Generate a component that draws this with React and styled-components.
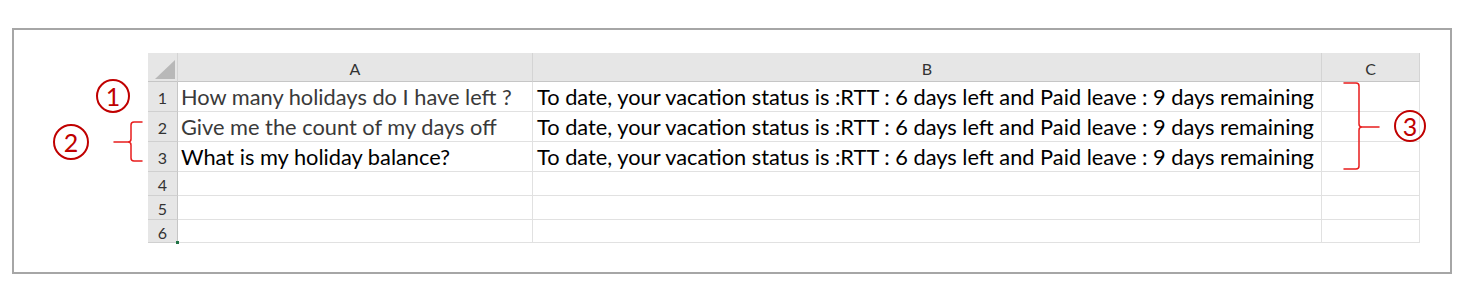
import React from "react";
import styled, { createGlobalStyle } from "styled-components";

const GlobalStyle = createGlobalStyle`
  html, body {
    margin: 0;
    padding: 0;
    background: #ffffff;
  }
  body {
    font-family: "Lato", "Open Sans", sans-serif;
  }
`;

const Page = styled.div`
  position: relative;
  width: 1469px;
  height: 292px;
  padding: 28px 0 0 12px;
  box-sizing: border-box;
`;

const Frame = styled.div`
  width: 1440px;
  height: 246px;
  box-sizing: border-box;
  border: 2px solid #a6a6a6;
  padding: 23px 0 0 134px;
`;

const Sheet = styled.div`
  display: grid;
  grid-template-columns: 30px 355px 789px 98px;
  grid-template-rows: 29px 30px 30px 30px 24px 24px 23px;
`;

const Corner = styled.div`
  position: relative;
  background: #e6e6e6;
  border-bottom: 1px solid #c6c6c6;
  border-right: 1px solid #d4d4d4;
  box-sizing: border-box;

  &::after {
    content: "";
    position: absolute;
    right: 2px;
    bottom: 2px;
    width: 0;
    height: 0;
    border-style: solid;
    border-width: 0 0 19px 20px;
    border-color: transparent transparent #b8b8b8 transparent;
  }
`;

const ColHead = styled.div`
  background: #e6e6e6;
  border-bottom: 1px solid #c6c6c6;
  border-right: 1px solid #d4d4d4;
  box-sizing: border-box;
  display: flex;
  align-items: center;
  justify-content: center;
  padding-top: 2px;
  font-family: "Lato", "Open Sans", sans-serif;
  font-size: 16px;
  color: #333333;
`;

const RowHead = styled.div`
  position: relative;
  background: #e6e6e6;
  border-bottom: 1px solid #d0d0d0;
  border-right: 1px solid #c6c6c6;
  box-sizing: border-box;
  display: flex;
  align-items: center;
  justify-content: center;
  padding-top: 2px;
  font-family: "Lato", "Open Sans", sans-serif;
  font-size: 16px;
  color: #333333;

  ${(p) =>
    p.$last &&
    `&::after {
      content: "";
      position: absolute;
      right: -2px;
      bottom: -2px;
      width: 3px;
      height: 3px;
      background: #217346;
    }`}
`;

const Cell = styled.div`
  border-bottom: 1px solid #e1e1e1;
  border-right: 1px solid #e1e1e1;
  box-sizing: border-box;
  display: flex;
  align-items: center;
  padding-left: ${(p) => (p.$wide ? "4px" : "3px")};
  font-family: "Lato", "Open Sans", sans-serif;
  font-size: 21.8px;
  color: ${(p) => p.$color || "#000000"};
  white-space: nowrap;
  overflow: hidden;
`;

const Badge = styled.div`
  position: absolute;
  left: ${(p) => p.$x - p.$d / 2}px;
  top: ${(p) => p.$y - p.$d / 2}px;
  width: ${(p) => p.$d}px;
  height: ${(p) => p.$d}px;
  box-sizing: border-box;
  border: 2px solid #c00000;
  border-radius: 50%;
  display: flex;
  align-items: center;
  justify-content: center;
  font-family: "Lato", "Open Sans", sans-serif;
  font-size: 25px;
  color: #c00000;
`;

const Braces = styled.svg`
  position: absolute;
  left: 0;
  top: 0;
  pointer-events: none;
`;

const answer =
  "To date, your vacation status is :RTT : 6 days left and Paid leave : 9 days remaining";

const rows = [
  { n: 1, a: "How many holidays do I have left ?", color: "#3a3a3a", b: answer },
  { n: 2, a: "Give me the count of my days off", color: "#3a3a3a", b: answer },
  { n: 3, a: "What is my holiday balance?", color: "#000000", b: answer },
  { n: 4, a: "", b: "" },
  { n: 5, a: "", b: "" },
  { n: 6, a: "", b: "" },
];

export default function App() {
  return (
    <>
      <GlobalStyle />
      <Page>
        <Frame>
          <Sheet>
            <Corner />
            <ColHead>A</ColHead>
            <ColHead>B</ColHead>
            <ColHead>C</ColHead>
            {rows.map((r) => (
              <React.Fragment key={r.n}>
                <RowHead $last={r.n === 6}>{r.n}</RowHead>
                <Cell $color={r.color}>{r.a}</Cell>
                <Cell $wide>{r.b}</Cell>
                <Cell />
              </React.Fragment>
            ))}
          </Sheet>
        </Frame>

        <Badge $x={113} $y={96} $d={34}>1</Badge>
        <Badge $x={71} $y={142} $d={36}>2</Badge>
        <Badge $x={1410} $y={126} $d={32}>3</Badge>

        <Braces width="1469" height="292" viewBox="0 0 1469 292">
          <g fill="none" stroke="#e81c1c" strokeWidth="1.5" strokeLinecap="round">
            <path d="M142,122 L134,122 Q131,122 131,125 L131,139 Q131,142 128,142 L114,142 M128,142 Q131,142 131,145 L131,158 Q131,161 134,161 L142,161" />
            <path d="M1344,83 L1356,83 Q1359,83 1359,86 L1359,124 Q1359,127 1362,127 L1379,127 M1362,127 Q1359,127 1359,130 L1359,166 Q1359,169 1356,169 L1344,169" />
          </g>
        </Braces>
      </Page>
    </>
  );
}
